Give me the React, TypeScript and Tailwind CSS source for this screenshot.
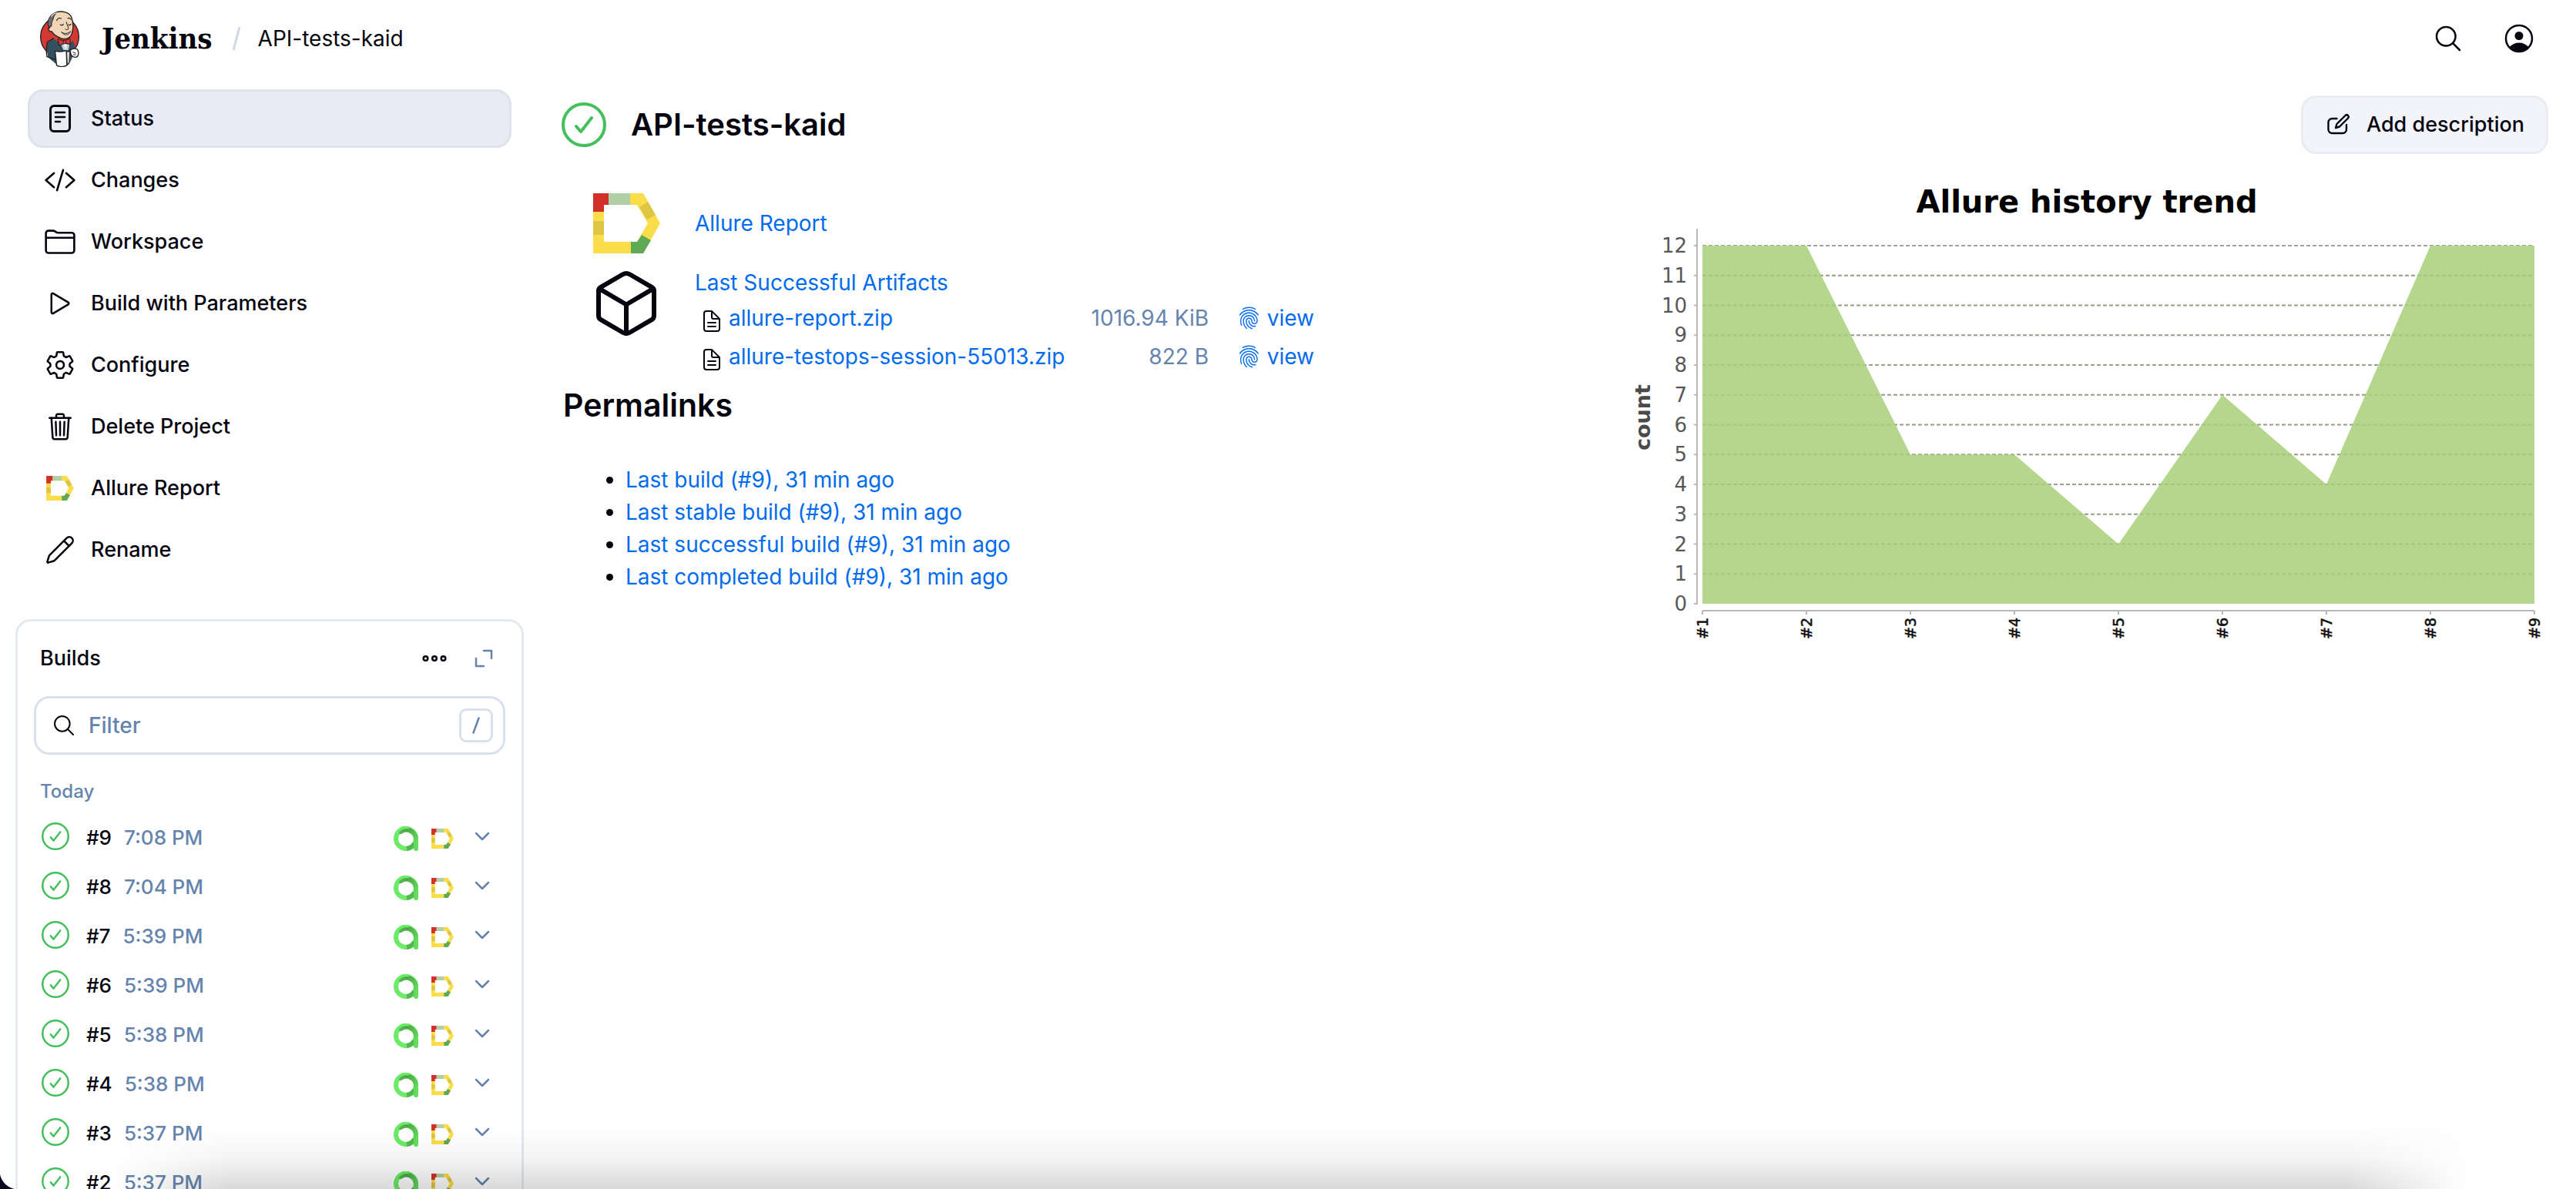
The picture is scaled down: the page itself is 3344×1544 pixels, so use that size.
import React from "react";
import {
  IoCodeSlashOutline,
  IoCubeOutline,
  IoDocumentTextOutline,
  IoFingerPrintOutline,
  IoFolderOutline,
  IoPlayOutline,
  IoSearchOutline,
  IoSettingsOutline,
  IoTrashOutline,
} from "react-icons/io5";
import { Pencil } from "lucide-react";

function JenkinsLogo() {
  return (
    <svg viewBox="64 40 160 220" className="h-[73px] w-[53px]" aria-hidden="true" strokeLinejoin="round" strokeLinecap="round">
      <ellipse cx="144" cy="142" rx="75" ry="78" fill="#d33833" stroke="#231f20" strokeWidth="4" />
      <path d="M98 164 L120 150 L166 176 L196 158 L206 186 L192 226 L180 250 L132 250 L98 222 L92 182 Z" fill="#335061" />
      <path d="M96 162 C92 180 90 196 94 220 L130 232 M96 162 L120 148" fill="none" stroke="#231f20" strokeWidth="4" />
      <path d="M104 108 C96 84 104 56 128 47 C150 38 180 44 190 64 C197 84 198 108 192 128 C188 146 168 154 150 148 C134 142 122 136 112 120 C102 124 96 108 104 104 Z" fill="#f0d6b7" stroke="#231f20" strokeWidth="4" />
      <path d="M98 94 C96 72 108 52 134 46 C124 56 118 64 118 74 C112 82 112 92 112 100 L104 104 Z" fill="#6d6b6d" stroke="#231f20" strokeWidth="3" />
      <path d="M112 62 C116 54 124 50 134 48" stroke="#d8d8d8" strokeWidth="4" fill="none" />
      <path d="M132 78 C136 70 144 66 150 70 M176 70 C182 66 186 70 188 74" stroke="#231f20" strokeWidth="3.5" fill="none" />
      <path d="M146 94 C150 98 156 98 158 92 M178 94 C182 98 186 96 188 92" stroke="#231f20" strokeWidth="3.5" fill="none" />
      <path d="M170 84 C172 96 180 106 178 112 C174 116 168 114 166 112" stroke="#231f20" strokeWidth="3" fill="none" />
      <path d="M152 124 C162 132 178 130 186 120 C182 138 160 138 152 124 Z" fill="#fff" stroke="#231f20" strokeWidth="3" />
      <path d="M148 172 L162 168 L184 170 L180 196 L158 196 Z" fill="#b8cfdc" stroke="#231f20" strokeWidth="2.5" />
      <path d="M160 172 L172 172 L168 194 Z" fill="#fff" />
      <path d="M138 150 L160 158 L184 148 L186 172 L166 166 L142 176 Z" fill="#d33833" stroke="#231f20" strokeWidth="3" />
      <path d="M160 156 L168 156 L168 168 L160 168 Z" fill="#ef3d3a" stroke="#231f20" strokeWidth="2" />
      <path d="M126 198 C144 202 160 200 170 196 L172 254 C160 260 144 260 132 254 Z" fill="#fff" stroke="#231f20" strokeWidth="4" />
      <path d="M172 200 L184 200 L182 240 L174 252 Z" fill="#dcd9d8" stroke="#231f20" strokeWidth="3" />
      <path d="M186 194 C196 186 212 186 216 196 C220 208 216 222 206 222 C196 222 184 216 186 194 Z" fill="#fff" stroke="#231f20" strokeWidth="4" />
      <path d="M196 202 L206 206 M198 212 L206 212" stroke="#231f20" strokeWidth="3" />
    </svg>
  );
}

function StatusIcon() {
  return (
    <svg viewBox="0 0 40 40" className="size-10" fill="none" stroke="currentColor" strokeWidth="3" strokeLinecap="round" aria-hidden="true">
      <rect x="7.5" y="3.5" width="25" height="33" rx="4.5" />
      <path d="M14 12h12M14 18h12M14 24h6" strokeWidth="2.5" />
    </svg>
  );
}

function AllureLogo({ className }: { className: string }) {
  return (
    <svg viewBox="0 0 87 78" className={className} aria-hidden="true">
      <path fillRule="evenodd" fill="#fbdc49" d="M0 0H65L87 39L65 78H0ZM14 15V63H57L71 39L57 15Z" />
      <path fill="#d12f28" d="M0 0H20V15H14V24H0Z" />
      <path fill="#b0cfa6" d="M20 0H48V15H20Z" />
      <path fill="#dec544" d="M71 11L81 28L70 34L60 18Z" />
      <path fill="#dec544" d="M0 36H14V54H0Z" />
      <path fill="#5fa956" d="M49 63H57L63 54L75 61L65 78H49Z" />
    </svg>
  );
}

function TestOpsLogo() {
  return (
    <svg viewBox="0 0 32 32" className="size-8" aria-hidden="true">
      <defs>
        <linearGradient id="stem" gradientUnits="userSpaceOnUse" x1="8" y1="4" x2="30" y2="20">
          <stop offset="0" stopColor="#58c653" />
          <stop offset="0.3" stopColor="#4aa545" />
          <stop offset="1" stopColor="#64dc5e" />
        </linearGradient>
      </defs>
      <circle cx="16" cy="16" r="13" fill="none" stroke="#6ceb66" strokeWidth="6" />
      <path d="M27 22A13 13 0 0 1 17 29" fill="none" stroke="#52b84d" strokeWidth="6" />
      <path d="M9 7C17 1 29 7 29 17V29" fill="none" stroke="url(#stem)" strokeWidth="6" strokeLinecap="round" />
      <path d="M3 16A13 13 0 0 1 20 2" fill="none" stroke="#6ceb66" strokeWidth="3.500" />
    </svg>
  );
}

function SuccessIcon({ className }: { className: string }) {
  return (
    <svg viewBox="0 0 58 58" className={className} fill="none" stroke="#45bf5b" strokeWidth="4" strokeLinecap="round" strokeLinejoin="round" aria-hidden="true">
      <circle cx="29" cy="29" r="27" />
      <path d="M19 31L25 38L39 20" />
    </svg>
  );
}

const tasks = [
  { label: "Status", icon: <StatusIcon />, current: true },
  { label: "Changes", icon: <IoCodeSlashOutline className="size-[42px]" /> },
  { label: "Workspace", icon: <IoFolderOutline className="size-[42px]" /> },
  { label: "Build with Parameters", icon: <IoPlayOutline className="size-10" /> },
  { label: "Configure", icon: <IoSettingsOutline className="size-10" /> },
  { label: "Delete Project", icon: <IoTrashOutline className="size-10" /> },
  { label: "Allure Report", icon: <AllureLogo className="h-8 w-9" /> },
  { label: "Rename", icon: <Pencil className="size-10" strokeWidth={1.5} /> },
];

const builds = [
  ["#9", "7:08 PM"],
  ["#8", "7:04 PM"],
  ["#7", "5:39 PM"],
  ["#6", "5:39 PM"],
  ["#5", "5:38 PM"],
  ["#4", "5:38 PM"],
  ["#3", "5:37 PM"],
  ["#2", "5:37 PM"],
];

const artifacts = [
  ["allure-report.zip", "1016.94 KiB"],
  ["allure-testops-session-55013.zip", "822 B"],
];

const permalinks = [
  "Last build (#9), 31 min ago",
  "Last stable build (#9), 31 min ago",
  "Last successful build (#9), 31 min ago",
  "Last completed build (#9), 31 min ago",
];

function Header() {
  return (
    <header className="flex h-[100px] shrink-0 items-center justify-between pr-[54px] pl-[51px]">
      <div className="flex items-center">
        <a href="#home" className="flex items-center gap-7">
          <JenkinsLogo />
          <span className="font-['DejaVu_Serif_Condensed','DejaVu_Serif',serif] text-[38px] leading-[48px] font-bold">Jenkins</span>
        </a>
        <svg viewBox="0 0 12 32" className="mr-[22px] ml-[25px] h-8 w-3" stroke="#d0d9e6" strokeWidth="3" aria-hidden="true">
          <path d="M2 31L10 1" />
        </svg>
        <a href="#project" className="text-[28px] font-normal">API-tests-kaid</a>
      </div>
      <div className="flex items-center gap-[52px]">
        <button type="button" aria-label="Search">
          <IoSearchOutline className="size-10" />
        </button>
        <button type="button" aria-label="Account">
          <svg viewBox="0 0 40 40" className="size-10" aria-hidden="true">
            <circle cx="20" cy="20" r="17" fill="none" stroke="currentColor" strokeWidth="2.5" />
            <circle cx="20" cy="16.500" r="5.500" fill="currentColor" />
            <path d="M7.500 31C11 27.500 15 25.500 20 25.500S29 27.500 32.500 31A17.500 17.500 0 0 1 7.500 31Z" fill="currentColor" />
          </svg>
        </button>
      </div>
    </header>
  );
}

function Builds() {
  return (
    <section className="mx-5 mt-[52px] rounded-[20px] border-[3px] border-[#e4e9f1] bg-white px-[21px] pb-6">
      <div className="flex h-[97px] items-center justify-between pr-3 pb-[2px] pl-2">
        <h2 className="font-[550]">Builds</h2>
        <div className="flex items-center gap-8">
          <button type="button" aria-label="More actions">
            <svg viewBox="0 0 32 32" className="size-8" fill="none" stroke="currentColor" strokeWidth="2.5" aria-hidden="true">
              <circle cx="4.500" cy="16" r="2.800" />
              <circle cx="16" cy="16" r="2.800" />
              <circle cx="27.500" cy="16" r="2.800" />
            </svg>
          </button>
          <button type="button" aria-label="Expand">
            <svg viewBox="0 0 32 32" className="size-8" fill="none" stroke="#6584ad" strokeWidth="2.500" strokeLinecap="round" strokeLinejoin="round" aria-hidden="true">
              <path d="M16 6H26V16M6 16V26H16" />
            </svg>
          </button>
        </div>
      </div>
      <label className="flex h-[76px] items-center rounded-[20px] border-[3px] border-[#dae0ec] pr-[13px] pl-5">
        <IoSearchOutline className="size-8 shrink-0" />
        <input type="search" aria-label="Filter builds" placeholder="Filter" className="ml-4 min-w-0 flex-1 bg-transparent text-[28px] outline-none placeholder:text-[#6584ad]" />
        <kbd className="flex h-11 w-11 items-center justify-center rounded-[9px] border-[3px] border-[#dae0ec]">
          <svg viewBox="0 0 10 22" className="h-[22px] w-[10px]" stroke="#6584ad" strokeWidth="2.500" strokeLinecap="round" aria-hidden="true">
            <path d="M1.500 20.500L8.500 1.500" />
          </svg>
        </kbd>
      </label>
      <h3 className="mt-7 mb-[6px] pl-2 text-[24px] leading-10 font-medium text-[#6584ad]">Today</h3>
      <ul>
        {builds.map(([id, time]) => (
          <li key={id} className="flex h-16 items-center pr-[18px] pl-[10px] text-[26px]">
            <SuccessIcon className="size-9" />
            <a href="#build" className="ml-[22px] flex gap-4 pt-1">
              <span className="font-[550]">{id}</span>
              <span className="text-[#6584ad]">{time}</span>
            </a>
            <div className="ml-auto flex items-center gap-[17px] pt-[6px]">
              <TestOpsLogo />
              <AllureLogo className="h-[26px] w-[29px]" />
            </div>
            <button type="button" aria-label={"Actions for build " + id} className="ml-[25px]">
              <svg viewBox="0 0 24 24" className="size-6" fill="none" stroke="#6584ad" strokeWidth="2.500" strokeLinecap="round" strokeLinejoin="round" aria-hidden="true">
                <path d="M4 8L12 16L20 8" />
              </svg>
            </button>
          </li>
        ))}
      </ul>
    </section>
  );
}

const counts = [12, 12, 5, 5, 2, 7, 4, 12, 12];
const left = 102;
const base = 568;
const stepX = 135;
const stepY = 38.75;

function TrendChart() {
  const area = counts.map((c, i) => `L${left + i * stepX} ${base - c * stepY}`).join("");
  const levels = Array.from({ length: 13 }, (_, i) => i);
  return (
    <svg viewBox="0 0 1200 640" className="mt-4 w-[1200px] shrink-0 font-['DejaVu_Sans',sans-serif]" role="img" aria-label="Allure history trend">
      <rect width="1200" height="640" fill="#fff" />
      <text x="601" y="60" textAnchor="middle" fontSize="40" fontWeight="700" fill="#000">Allure history trend</text>
      {levels.slice(1).map((n) => (
        <path key={n} d={`M${left} ${base - n * stepY}H1182`} stroke="#a0a0a0" strokeWidth="2" strokeDasharray="5 3" />
      ))}
      <path d={`M${left} ${base}${area}V${base}Z`} fill="#b5d68d" />
      {levels.slice(1, 12).map((n) => (
        <path key={n} d={`M${left} ${base - n * stepY}H1182`} stroke="#7a9a55" strokeOpacity="0.25" strokeWidth="2" strokeDasharray="5 3" />
      ))}
      <path d="M95 81V569M102 577H1182" stroke="#b8b8b8" strokeWidth="2" />
      {levels.map((n) => (
        <g key={n}>
          <path d={`M91 ${base - n * stepY}H95`} stroke="#b8b8b8" strokeWidth="2" />
          <text x="82" y={base - n * stepY + 9} textAnchor="end" fontSize="26" fill="#585858">{n}</text>
        </g>
      ))}
      {counts.map((_, i) => (
        <g key={i}>
          <path d={`M${left + i * stepX} 577v5`} stroke="#b8b8b8" strokeWidth="2" />
          <text transform={`translate(${left + i * stepX + 7} 614) rotate(-90)`} fontSize="19" stroke="#111" strokeWidth="0.6" fill="#111">{"#" + (i + 1)}</text>
        </g>
      ))}
      <text transform="translate(34 369) rotate(-90)" fontSize="27" fontWeight="700" fill="#4a4a4a">count</text>
    </svg>
  );
}

function EditIcon() {
  return (
    <svg viewBox="0 0 32 32" className="size-8" fill="none" stroke="currentColor" strokeWidth="2.400" strokeLinecap="round" strokeLinejoin="round" aria-hidden="true">
      <path d="M13.500 8H7.500A5 5 0 0 0 2.500 13V22A5 5 0 0 0 7.500 27H21A5 5 0 0 0 26 22V16" />
      <path d="M12 20L13.500 15L24.500 4A2.300 2.300 0 0 1 28 7.500L17 18.500Z" />
    </svg>
  );
}

export default function App() {
  return (
    <div className="relative flex h-screen flex-col overflow-hidden bg-[#fefefe] font-['Inter',sans-serif] text-[27px] leading-[42px] font-[450] text-[#05050f]">
      <Header />
      <div className="flex min-h-0 flex-1">
        <aside className="w-[700px] shrink-0 pt-4">
          <nav className="mx-9 flex flex-col gap-1">
            {tasks.map((t) => (
              <a
                key={t.label}
                href="#task"
                aria-current={t.current ? "page" : undefined}
                className={
                  "flex h-[76px] items-center gap-[19px] rounded-[20px] border-[3px] pl-[18px] " +
                  (t.current ? "border-[#dfe2ea] bg-[#e8ebf4]" : "border-transparent")
                }
              >
                <span className="flex w-[42px] justify-center">{t.icon}</span>
                {t.label}
              </a>
            ))}
          </nav>
          <Builds />
        </aside>
        <main className="min-w-0 flex-1 pt-6 pr-9 pl-[29px]">
          <div className="flex h-[76px] items-center gap-8">
            <SuccessIcon className="size-[58px]" />
            <h1 className="text-[40px] leading-[56px] font-semibold">API-tests-kaid</h1>
            <button type="button" className="ml-auto flex h-[76px] items-center gap-5 rounded-[20px] border-[3px] border-[#ebecf1] bg-[#f3f4f9] pr-7 pl-[30px]">
              <EditIcon />
              Add description
            </button>
          </div>
          <div className="flex items-start justify-between text-[28px] font-normal">
            <div className="pt-[42px]">
              <div className="flex h-24 items-center gap-[41px] pl-9">
                <span className="flex w-24 justify-center">
                  <AllureLogo className="h-[78px] w-[87px]" />
                </span>
                <a href="#allure" className="text-[#006bed]">Allure Report</a>
              </div>
              <div className="mt-2 flex items-start gap-[41px] pl-9">
                <IoCubeOutline className="size-24" />
                <div>
                  <a href="#artifacts" className="block text-[#006bed]">Last Successful Artifacts</a>
                  <table className="w-[804px] table-fixed">
                    <tbody>
                      {artifacts.map(([name, size]) => (
                        <tr key={name} className="h-[50px]">
                          <td className="w-[44px] pt-2 pl-[6px]">
                            <IoDocumentTextOutline className="size-8" />
                          </td>
                          <td className="w-[460px]">
                            <a href="#file" className="whitespace-nowrap text-[#006bed]">{name}</a>
                          </td>
                          <td className="w-[163px] text-right whitespace-nowrap text-[#6584ad]">{size}</td>
                          <td className="pl-[37px]">
                            <a href="#fingerprint" className="flex items-center gap-2 text-[#006bed]">
                              <IoFingerPrintOutline className="size-8" />
                              view
                            </a>
                          </td>
                        </tr>
                      ))}
                    </tbody>
                  </table>
                </div>
              </div>
              <h2 className="mt-[10px] pl-[2px] text-[41px] leading-[56px] font-semibold">Permalinks</h2>
              <ul className="mt-12 list-disc pl-[83px]">
                {permalinks.map((p) => (
                  <li key={p}>
                    <a href="#permalink" className="text-[#006bed]">{p}</a>
                  </li>
                ))}
              </ul>
            </div>
            <TrendChart />
          </div>
        </main>
      </div>
      <div className="pointer-events-none absolute inset-x-36 bottom-0 h-20 bg-linear-to-b from-transparent via-black/4 to-black/15 mask-x-from-95%" />
      <div className="pointer-events-none absolute bottom-0 left-0 size-6 bg-[radial-gradient(circle_at_top_right,transparent_24px,#0b0820_25px)]" />
    </div>
  );
}
